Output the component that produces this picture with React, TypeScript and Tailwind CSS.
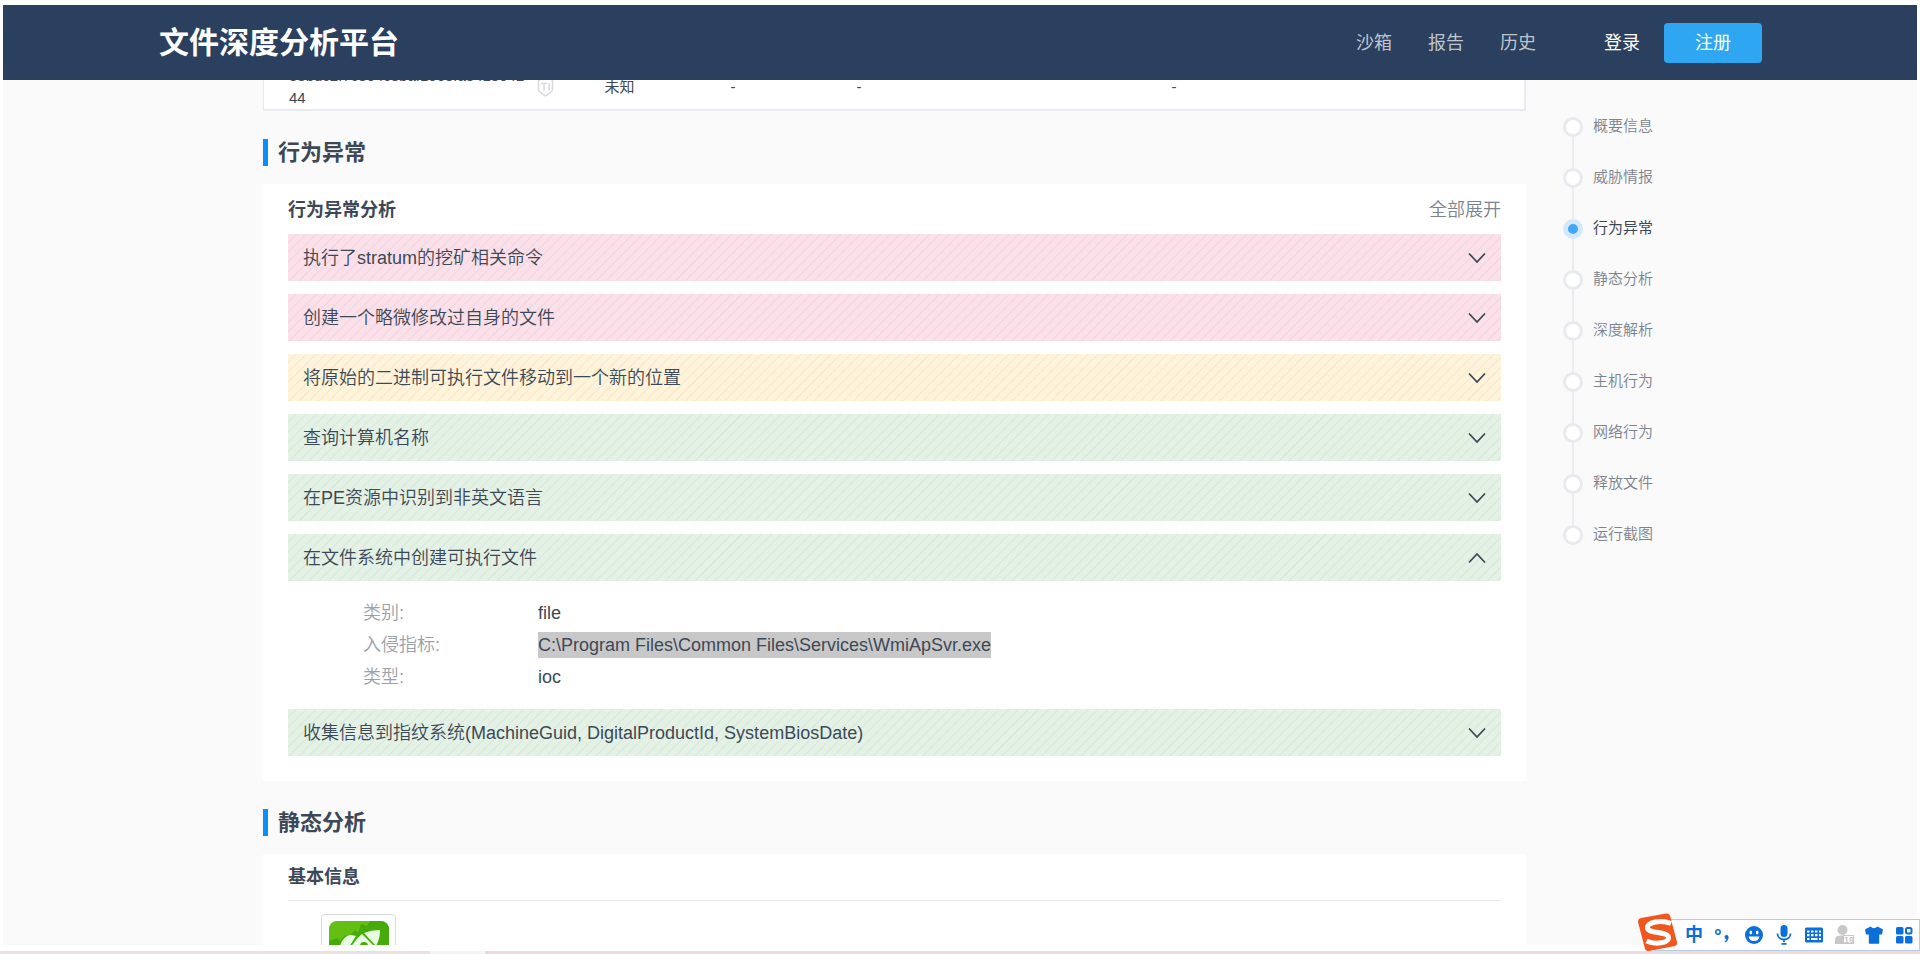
import { clsx } from "clsx";

const navLinks = ["沙箱", "报告", "历史"];

type Level = "high" | "medium" | "low";

const levelClass: Record<Level, string> = {
  high: "bg-[#fce0e9]",
  medium: "bg-[#fff4d9]",
  low: "bg-[#e4f2e6]",
};

const behaviors: {
  title: string;
  level: Level;
  details?: { label: string; value: string; selected?: boolean }[];
}[] = [
  { title: "执行了stratum的挖矿相关命令", level: "high" },
  { title: "创建一个略微修改过自身的文件", level: "high" },
  { title: "将原始的二进制可执行文件移动到一个新的位置", level: "medium" },
  { title: "查询计算机名称", level: "low" },
  { title: "在PE资源中识别到非英文语言", level: "low" },
  {
    title: "在文件系统中创建可执行文件",
    level: "low",
    details: [
      { label: "类别:", value: "file" },
      {
        label: "入侵指标:",
        value: "C:\\Program Files\\Common Files\\Services\\WmiApSvr.exe",
        selected: true,
      },
      { label: "类型:", value: "ioc" },
    ],
  },
  {
    title: "收集信息到指纹系统(MachineGuid, DigitalProductId, SystemBiosDate)",
    level: "low",
  },
];

const anchors = [
  "概要信息",
  "威胁情报",
  "行为异常",
  "静态分析",
  "深度解析",
  "主机行为",
  "网络行为",
  "释放文件",
  "运行截图",
];

function Header() {
  return (
    <header className="relative z-10 flex h-[75px] shrink-0 items-center bg-[#2b3f5e] pr-[155px] pl-[156px]">
      <h1 className="text-[30px] font-bold text-white">文件深度分析平台</h1>
      <nav className="ml-auto flex items-center gap-9 text-lg text-[#bfc5cf]">
        {navLinks.map((link) => (
          <a key={link} href="#">
            {link}
          </a>
        ))}
      </nav>
      <a href="#" className="ml-[68px] text-lg text-white">
        登录
      </a>
      <button
        type="button"
        className="ml-6 h-10 w-[98px] rounded bg-[#2fa6f2] text-lg text-white"
      >
        注册
      </button>
    </header>
  );
}

function ShieldIcon() {
  return (
    <svg width="17" height="20" viewBox="0 0 17 20" fill="none" stroke="#d8dadd">
      <path
        d="M8.5 1 15.500 3v9.500c0 2.800-4.600 4.600-7 6.500-2.400-1.900-7-3.700-7-6.500V3z"
        strokeWidth="1.5"
      />
      <path d="M4 6.500h6M7 6.500v7M12.200 6v7.500" strokeWidth="1.500" />
    </svg>
  );
}

function FileTable() {
  return (
    <table className="-mt-[18px] w-full table-fixed border border-r-2 border-b-2 border-[#e8eaf0] bg-white text-[15px] leading-[22px]">
      <tbody>
        <tr>
          <td className="w-[265px] pt-[2px] pl-[25px] break-all">
            e8bdc2f7c864c8baf1068fa841804244
          </td>
          <td className="w-[76px] pt-[2px] pl-2">
            <ShieldIcon />
          </td>
          <td className="w-[126px] pt-[2px]">未知</td>
          <td className="w-[126px] pt-[2px]">-</td>
          <td className="w-[315px] pt-[2px]">-</td>
          <td className="pt-[2px]">-</td>
        </tr>
      </tbody>
    </table>
  );
}

function SectionTitle({ children }: { children: string }) {
  return (
    <h2 className="flex items-center gap-[10px] text-[22px] leading-[27px] font-bold">
      <span className="h-[27px] w-[5px] bg-[#0a8dff]" />
      {children}
    </h2>
  );
}

function Chevron({ open }: { open: boolean }) {
  return (
    <svg
      width="18"
      height="12"
      viewBox="0 0 18 12"
      fill="none"
      stroke="#3d4856"
      strokeWidth="1.800"
    >
      <path d={open ? "M1 10.500 9 2l8 8.500" : "M1 1.500 9 10l8-8.500"} />
    </svg>
  );
}

function BehaviorPanel() {
  return (
    <section className="mt-[18px] bg-white px-[25px] pt-[10px] pb-[25px]">
      <div className="flex h-10 items-center justify-between pb-[9px] text-lg">
        <h3 className="font-bold">行为异常分析</h3>
        <button type="button" className="font-[350] text-[#7a838e]">
          全部展开
        </button>
      </div>
      <div className="flex flex-col gap-[13px]">
        {behaviors.map((item) => (
          <div key={item.title}>
            <button
              type="button"
              aria-expanded={Boolean(item.details)}
              className={clsx(
                "flex h-[47px] w-full items-center justify-between bg-[repeating-linear-gradient(135deg,transparent_0px,transparent_5px,rgba(60,70,85,0.07)_6px,transparent_7px)] pr-[15px] pl-[15px] text-left text-lg font-[350]",
                levelClass[item.level],
              )}
            >
              {item.title}
              <Chevron open={Boolean(item.details)} />
            </button>
            {item.details && (
              <dl className="grid grid-cols-[175px_1fr] pt-4 pb-[3px] pl-[75px] text-lg leading-8">
                {item.details.map((row) => (
                  <div key={row.label} className="contents">
                    <dt className="font-[350] text-[#9ba1a9]">{row.label}</dt>
                    <dd>
                      <span
                        className={clsx(
                          row.selected && "inline-block bg-[#c8c8c8] leading-[26px]",
                        )}
                      >
                        {row.value}
                      </span>
                    </dd>
                  </div>
                ))}
              </dl>
            )}
          </div>
        ))}
      </div>
    </section>
  );
}

function LeafLogo() {
  return (
    <svg width="60" height="60" viewBox="0 0 60 60">
      <rect width="60" height="60" rx="8" fill="#63bf14" />
      <path
        d="M0 20l8-3 3 3 5-6 4 2 6-7 3 3 3-9 6 2 3-5h11c4 0 8 4 8 8v52H0z"
        fill="#46ab0a"
      />
      <path d="M11 25c2-7 7-11 11-11 2 0 4 1 5 1L15 34z" fill="#e8fde0" />
      <path d="M20 30c2-5 7-12 13-17l12 12-8 14z" fill="#e8fde0" />
      <path d="M35 12c5-2 10-3 16-3 0 6-1 10-4 16z" fill="#e8fde0" />
      <circle cx="35" cy="25" r="4" fill="#46ab0a" />
    </svg>
  );
}

function StaticPanel() {
  return (
    <section className="mt-[18px] bg-white px-[25px]">
      <h3 className="flex h-[47px] items-center border-b border-[#e8e9eb] text-lg font-bold">
        基本信息
      </h3>
      <div className="mt-[13px] ml-[33px] flex size-[75px] items-start justify-center rounded border border-[#d8dadd] pt-[6px]">
        <LeafLogo />
      </div>
    </section>
  );
}

function AnchorNav() {
  return (
    <nav className="mt-[37px] ml-[37px] w-[120px] shrink-0 text-[15px]">
      <ol>
        {anchors.map((name, i) => {
          const active = name === "行为异常";
          return (
            <li key={name} className="flex gap-[10px]">
              <div className="flex flex-col items-center">
                <span
                  className={clsx(
                    "size-5 rounded-full",
                    active
                      ? "border-[5px] border-[#d3e9f9] bg-[#42a8f5]"
                      : "border-3 border-[#e8eaf0] bg-white",
                  )}
                />
                {i < anchors.length - 1 && (
                  <span className="h-[31px] w-[2px] bg-[#ebecef]" />
                )}
              </div>
              <a
                href="#"
                className={clsx(
                  "leading-[18px]",
                  active ? "text-[#3d4856]" : "font-[350] text-[#7a838e]",
                )}
              >
                {name}
              </a>
            </li>
          );
        })}
      </ol>
    </nav>
  );
}

const imeButtons = [
  {
    label: "标点",
    icon: (
      <>
        <circle cx="4" cy="7" r="2.200" fill="none" stroke="currentColor" strokeWidth="1.500" />
        <circle cx="12.500" cy="12" r="2" />
        <path d="M14.500 12q.300 3.500-3.500 5.500l-.500-.800q2-1.500 2-3.200z" />
      </>
    ),
  },
  {
    label: "表情",
    icon: (
      <>
        <circle cx="10" cy="10" r="9" />
        <ellipse cx="6.800" cy="7.500" rx="1.300" ry="1.900" fill="#fff" />
        <ellipse cx="13.200" cy="7.500" rx="1.300" ry="1.900" fill="#fff" />
        <path d="M4.500 11.500h11q-1 4.500-5.500 4.500t-5.500-4.500z" fill="#fff" />
      </>
    ),
  },
  {
    label: "语音",
    icon: (
      <>
        <rect x="6.500" y="0" width="7" height="12" rx="3.500" />
        <path
          d="M3.500 8.500c0 8 13 8 13 0M10 15v2M7.500 18.800h5"
          fill="none"
          stroke="currentColor"
          strokeWidth="1.800"
        />
      </>
    ),
  },
  {
    label: "键盘",
    icon: (
      <>
        <rect x="1" y="2.500" width="18" height="15" rx="1.500" />
        <path
          d="M3 6.500h2.500M7 6.500h2.500M11 6.500h2.500M15 6.500h2M3 10.200h2.500M7 10.200h2.500M11 10.200h2.500M15 10.200h2M3 14h2.500M7 14h6.500M15 14h2"
          stroke="#fff"
          strokeWidth="2.200"
        />
      </>
    ),
  },
  {
    label: "账号",
    muted: true,
    icon: (
      <>
        <circle cx="8.500" cy="5" r="5" />
        <path d="M1 19v-4q0-4 4.500-4.500h6q3 .300 4 2.500v6z" />
        <rect x="9.500" y="10.500" width="10" height="8" fill="#fff" stroke="currentColor" />
        <text x="10" y="18" fontSize="9" fontWeight="700">
          19
        </text>
      </>
    ),
  },
  {
    label: "皮肤",
    icon: (
      <path d="M1 4.500 6.500 1.500q3.500 3.500 7 0L19 4.500 18 9.500h-2.800V18q0 .800-.800.800H5.600q-.800 0-.800-.800V9.500H2z" />
    ),
  },
  {
    label: "工具箱",
    icon: (
      <>
        <rect x="2" y="2" width="7.500" height="7.500" rx="1.500" />
        <rect x="2" y="11" width="7.500" height="7.500" rx="1.500" />
        <rect x="11" y="11" width="7.500" height="7.500" rx="1.500" />
        <rect
          x="12"
          y="3"
          width="5.500"
          height="5.500"
          rx="1.500"
          fill="none"
          stroke="currentColor"
          strokeWidth="2"
        />
      </>
    ),
  },
];

function ImeToolbar() {
  return (
    <div className="fixed right-0 bottom-[3px] flex items-end">
      <svg width="40" height="38" viewBox="0 0 40 38" className="relative z-10 -mr-6">
        <path
          d="M3 5 28 .500q3-.500 4 2L39 29q.500 3-2 4L11 38q-3 .300-4-2L0 9Q-.500 6 3 5z"
          fill="#f0571f"
        />
        <path
          d="M33 10.500c-10-4-24-1.500-23.500 4.500C10 21 30 18 30.500 24.500 31 30 17 32 8.500 28"
          fill="none"
          stroke="#fff"
          strokeWidth="5"
        />
      </svg>
      <div className="flex h-8 items-center border border-[#b5cbe6] bg-white pl-6 text-[#0a6fd8]">
        <button type="button" className="w-[30px] text-lg leading-[30px] font-bold">
          中
        </button>
        {imeButtons.map((item) => (
          <button
            key={item.label}
            type="button"
            aria-label={item.label}
            className={clsx(
              "flex h-[30px] w-[30px] items-center justify-center",
              item.muted && "text-[#c8c8c8]",
            )}
          >
            <svg width="20" height="20" viewBox="0 0 20 20" fill="currentColor">
              {item.icon}
            </svg>
          </button>
        ))}
      </div>
    </div>
  );
}

export default function App() {
  return (
    <div className="flex h-screen flex-col overflow-hidden bg-white pt-[5px] font-['Liberation_Sans','Noto_Sans_CJK_SC',sans-serif] text-[#3d4856]">
      <div className="mx-[3px] flex min-h-0 flex-1 flex-col overflow-hidden bg-[#fafafa]">
        <Header />
        <main className="flex min-h-0 flex-1 pl-[260px]">
          <div className="min-w-0 flex-1">
            <FileTable />
            <div className="mt-7">
              <SectionTitle>行为异常</SectionTitle>
              <BehaviorPanel />
            </div>
            <div className="mt-7">
              <SectionTitle>静态分析</SectionTitle>
              <StaticPanel />
            </div>
          </div>
          <AnchorNav />
          <div className="w-[234px] shrink-0" />
        </main>
      </div>
      <footer className="flex h-[9px] shrink-0 items-end">
        <span className="h-[3px] w-[430px] bg-[#eadfe1]" />
        <span className="h-[3px] w-[57px] border-r border-[#cfc3c6] bg-[#f7f2f3]" />
        <span className="h-[3px] flex-1 bg-[#eddde2]" />
      </footer>
      <ImeToolbar />
    </div>
  );
}
